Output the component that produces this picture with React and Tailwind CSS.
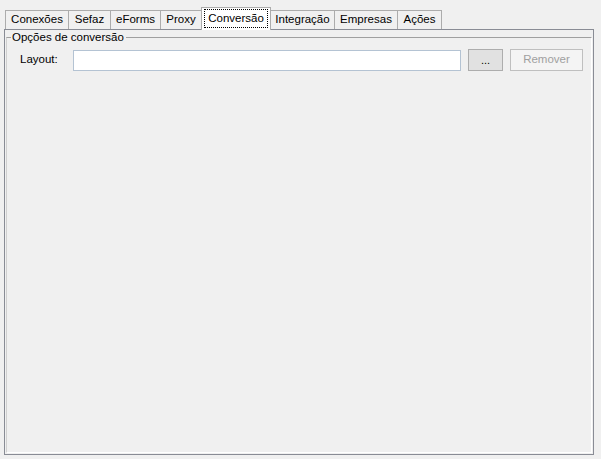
import React from 'react';

const tabs = [
    { label: 'Conexões', w: 64 },
    { label: 'Sefaz', w: 43 },
    { label: 'eForms', w: 51 },
    { label: 'Proxy', w: 42 },
    { label: 'Conversão', w: 70, active: true },
    { label: 'Integração', w: 65 },
    { label: 'Empresas', w: 64 },
    { label: 'Ações', w: 45 },
];

export default function App() {
    return (
        <div
            className="w-[601px] h-[459px] bg-[#f0f0f0] pl-[4px] pt-[7px] text-[11.5px] text-black overflow-hidden"
            style={{ fontFamily: '"Liberation Sans", Arial, sans-serif' }}
        >
            {/* Tab strip */}
            <div className="flex items-end h-[22px] pl-[1px] relative z-10">
                {tabs.map((t, i) => (
                    <div
                        key={t.label}
                        style={{ width: t.w }}
                        className={`flex items-center justify-center border border-b-0 ${i > 0 ? '-ml-px' : ''} ${
                            t.active
                                ? 'h-[23px] bg-white border-[#acacac] relative z-10 -mb-px pb-px'
                                : 'h-[19px] bg-[#f0f0f0] border-[#acacac]'
                        }`}
                    >
                        {t.active ? (
                            <span className="border border-dotted border-black w-[64px] h-[19px] flex items-center justify-center">{t.label}</span>
                        ) : (
                            <span>{t.label}</span>
                        )}
                    </div>
                ))}
            </div>

            {/* Tab page */}
            <div className="w-[590px] h-[426px] border border-[#898c95] pl-[1px] pr-[1px] pt-[7px] pb-[1px]">
                <div className="relative h-full border-t border-l border-t-[#a0a0a0] border-l-[#d0d0d0] border-r border-b border-r-white border-b-white">
                    <span className="absolute -top-[8px] left-[4px] bg-[#f0f0f0] pl-[1px] pr-[2px] leading-[14px]">
                        Opções de conversão
                    </span>
                    <div className="flex items-center pt-[11px] pl-[13px]">
                        <span className="w-[53px]">Layout:</span>
                        <div className="w-[388px] h-[21px] bg-white border border-[#b4c3d3]" />
                        <button className="ml-[7px] w-[35px] h-[22px] bg-[#e1e1e1] border border-[#adadad] text-[11px] flex items-center justify-center leading-none">
                            ...
                        </button>
                        <button className="ml-[7px] w-[73px] h-[22px] bg-[#f4f4f4] border border-[#bfbfbf] text-[#a0a0a0] flex items-center justify-center">
                            Remover
                        </button>
                    </div>
                </div>
            </div>
        </div>
    );
}
